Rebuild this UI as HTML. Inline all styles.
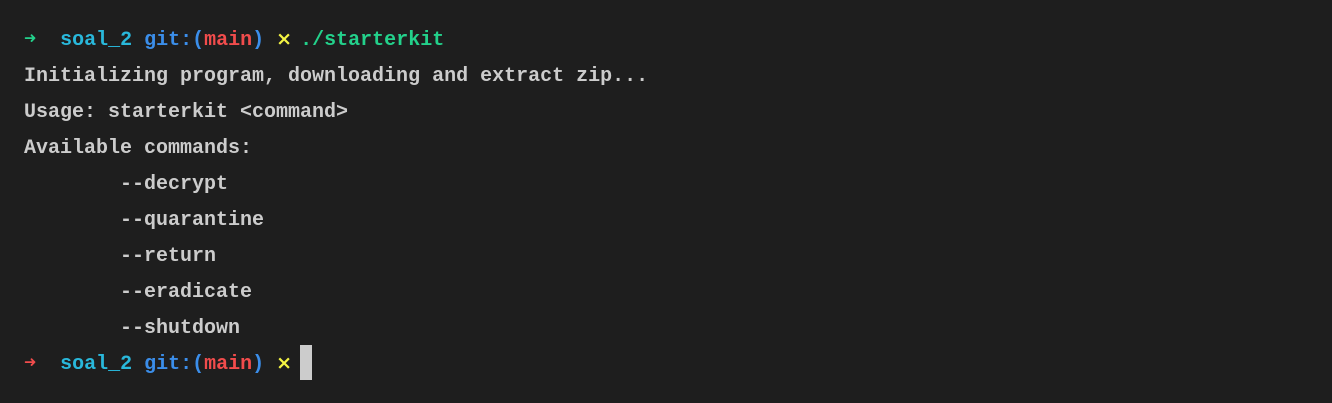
<!DOCTYPE html>
<html><head><style>
html,body{margin:0;padding:0;background:#1e1e1e;width:1332px;height:403px;overflow:hidden}
pre{margin:0;padding:23px 0 0 24px;font-family:"Liberation Mono","DejaVu Sans Mono",monospace;font-size:20px;line-height:36px;font-weight:bold;color:#cccccc;white-space:pre}
.g{color:#23d18b}.c{color:#29b8db}.b{color:#3b8eea}.r{color:#f14c4c}
.y{color:#f5f543;display:inline-block;width:12px;text-align:center;line-height:20px;font-family:"DejaVu Sans",sans-serif;font-size:19px}
.cur{display:inline-block;width:12px;height:1px;position:relative}
.cur::after{content:"";position:absolute;left:0;top:-23px;width:12px;height:35px;background:#cccccc}
</style></head><body><pre><span class="g">➜</span>  <span class="c">soal_2</span> <span class="b">git:(</span><span class="r">main</span><span class="b">)</span> <span class="y">×</span> <span class="g">./starterkit</span>
Initializing program, downloading and extract zip...
Usage: starterkit &lt;command&gt;
Available commands:
        --decrypt
        --quarantine
        --return
        --eradicate
        --shutdown
<span class="r">➜</span>  <span class="c">soal_2</span> <span class="b">git:(</span><span class="r">main</span><span class="b">)</span> <span class="y">×</span> <span class="cur"></span></pre></body></html>
